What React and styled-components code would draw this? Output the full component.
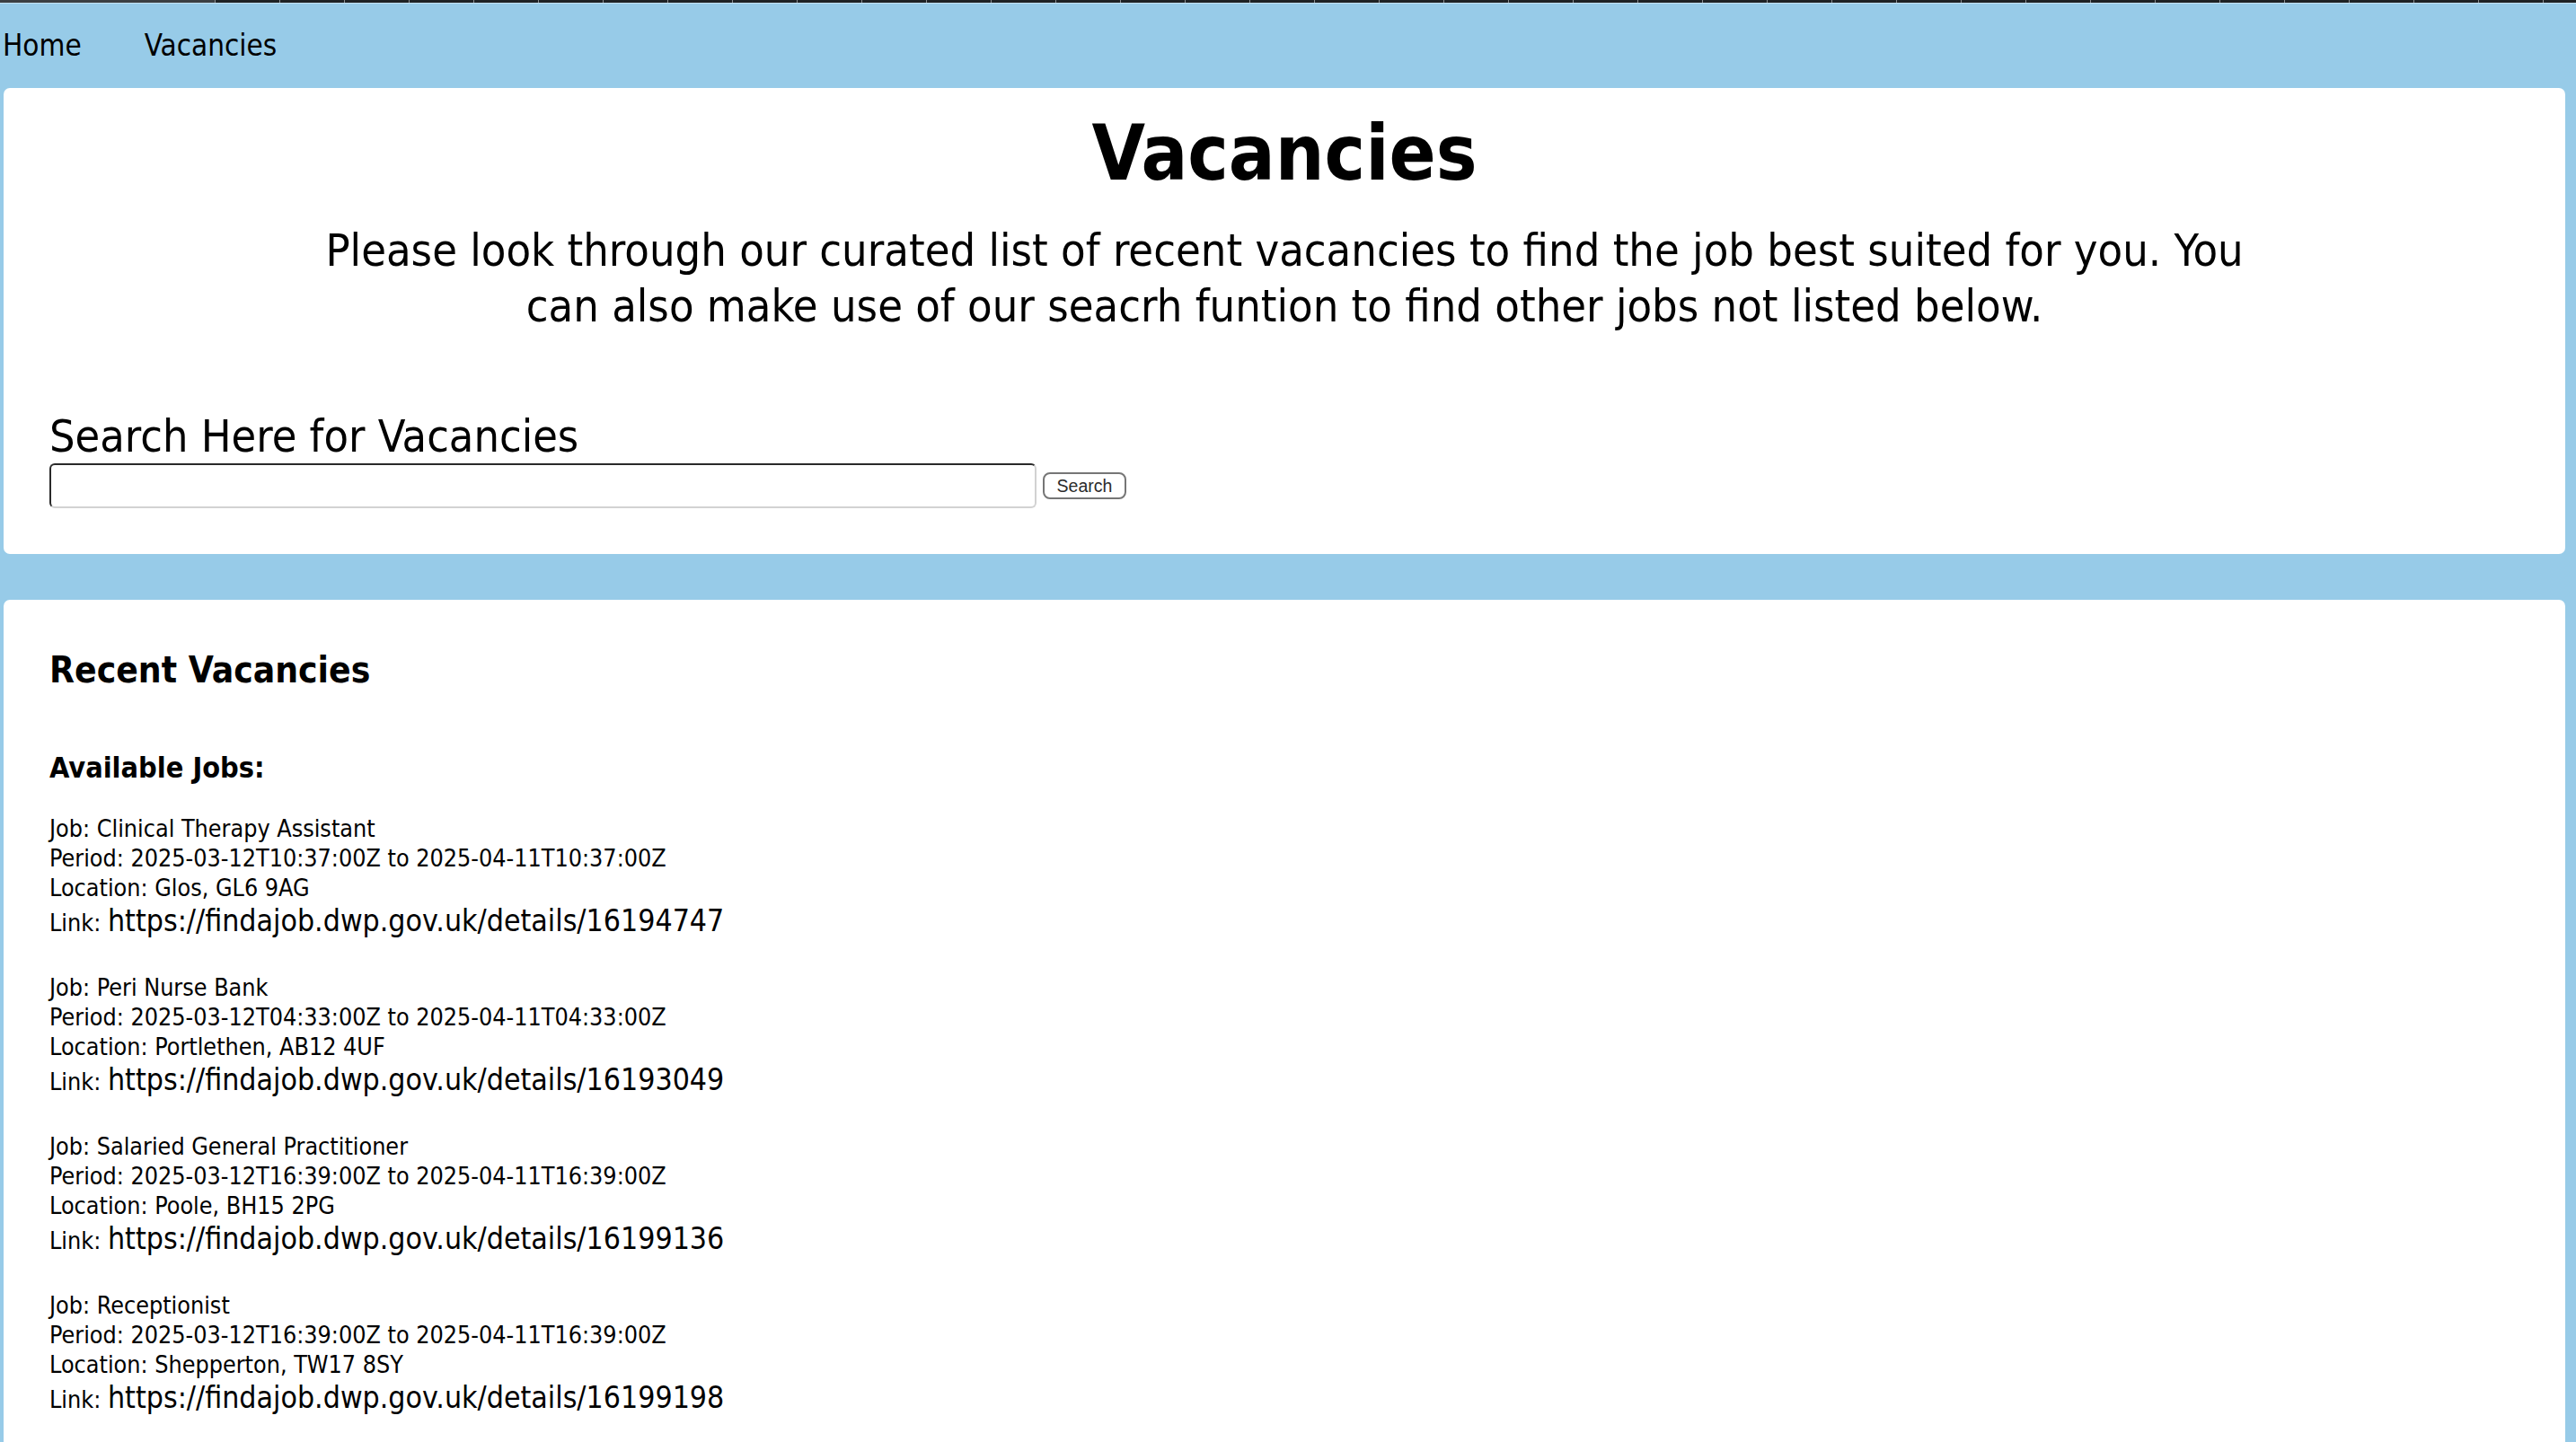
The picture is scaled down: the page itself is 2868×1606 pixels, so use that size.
import React from "react";
import styled, { createGlobalStyle } from "styled-components";

const GlobalStyle = createGlobalStyle`
  html, body {
    margin: 0;
    padding: 0;
    background: #97cbe8;
  }
  body {
    font-family: "DejaVu Sans Condensed", "DejaVu Sans", sans-serif;
    color: #000;
  }
`;

const Page = styled.div`
  min-height: 1606px;
  background: #97cbe8;
`;

const TopStrip = styled.div`
  height: 3px;
  border-bottom: 1px solid #c4e2f2;
  background:
    linear-gradient(to right, #3b3f42 0, #3b3f42 239px, transparent 239px),
    repeating-linear-gradient(
      to right,
      #8a8d90 0,
      #8a8d90 1px,
      #1e2225 1px,
      #1e2225 72px
    );
  background-position: 0 0, 239px 0;
`;

const Nav = styled.nav`
  display: flex;
  align-items: flex-start;
  gap: 70px;
  height: 94px;
  padding: 27px 0 0 3px;
  box-sizing: border-box;
`;

const NavLink = styled.a`
  font-size: 33px;
  line-height: 40px;
  color: #000;
  text-decoration: none;
`;

const Card = styled.section`
  background: #fff;
  border-radius: 7px;
  margin: ${(p) => (p.$gap ? "51px" : "0")} 12px 0 4px;
  padding: ${(p) => p.$pad};
`;

const Title = styled.h1`
  margin: 0;
  text-align: center;
  font-size: 85.5px;
  line-height: 100px;
  font-weight: bold;
`;

const Intro = styled.p`
  margin: 27px auto 0;
  text-align: center;
  font-size: 50.2px;
  line-height: 62px;
`;

const SearchHeading = styled.h2`
  margin: 85px 0 0;
  font-size: 50px;
  line-height: 59px;
  font-weight: normal;
`;

const SearchRow = styled.form`
  display: flex;
  align-items: center;
  gap: 7px;
`;

const SearchInput = styled.input`
  width: 1099px;
  height: 50px;
  box-sizing: border-box;
  border-style: solid;
  border-width: 2px;
  border-color: #2a2a2a #d2d2d2 #d2d2d2 #2a2a2a;
  border-radius: 6px;
  background: #fff;
  outline: none;
  padding: 0 8px;
  font-size: 24px;
`;

const SearchButton = styled.button`
  width: 93px;
  height: 30px;
  box-sizing: border-box;
  border: 2px solid #767676;
  border-radius: 8px;
  background: #fff;
  color: #2b2b2b;
  font-family: "Liberation Sans", Arial, sans-serif;
  font-size: 19.5px;
  padding: 0;
`;

const SectionTitle = styled.h2`
  margin: 0;
  font-size: 40.4px;
  line-height: 50px;
  font-weight: bold;
`;

const SubTitle = styled.h3`
  margin: 66px 0 33px;
  font-size: 32.2px;
  line-height: 36px;
  font-weight: bold;
`;

const JobBlock = styled.div`
  margin-bottom: 34px;
`;

const JobLine = styled.div`
  font-size: 26.7px;
  line-height: ${(p) => (p.$tall ? "42px" : "33px")};
`;

const JobUrl = styled.span`
  font-size: 33.6px;
`;

const jobs = [
  {
    title: "Clinical Therapy Assistant",
    from: "2025-03-12T10:37:00Z",
    to: "2025-04-11T10:37:00Z",
    location: "Glos, GL6 9AG",
    url: "https://findajob.dwp.gov.uk/details/16194747",
  },
  {
    title: "Peri Nurse Bank",
    from: "2025-03-12T04:33:00Z",
    to: "2025-04-11T04:33:00Z",
    location: "Portlethen, AB12 4UF",
    url: "https://findajob.dwp.gov.uk/details/16193049",
  },
  {
    title: "Salaried General Practitioner",
    from: "2025-03-12T16:39:00Z",
    to: "2025-04-11T16:39:00Z",
    location: "Poole, BH15 2PG",
    url: "https://findajob.dwp.gov.uk/details/16199136",
  },
  {
    title: "Receptionist",
    from: "2025-03-12T16:39:00Z",
    to: "2025-04-11T16:39:00Z",
    location: "Shepperton, TW17 8SY",
    url: "https://findajob.dwp.gov.uk/details/16199198",
  },
];

export default function App() {
  return (
    <Page>
      <GlobalStyle />
      <TopStrip />
      <Nav>
        <NavLink href="#">Home</NavLink>
        <NavLink href="#">Vacancies</NavLink>
      </Nav>
      <Card $pad="23px 51px 51px 51px">
        <Title>Vacancies</Title>
        <Intro>
          Please look through our curated list of recent vacancies to find the
          job best suited for you. You
          <br />
          can also make use of our seacrh funtion to find other jobs not listed
          below.
        </Intro>
        <SearchHeading>Search Here for Vacancies</SearchHeading>
        <SearchRow onSubmit={(e) => e.preventDefault()}>
          <SearchInput type="text" />
          <SearchButton type="submit">Search</SearchButton>
        </SearchRow>
      </Card>
      <Card $gap $pad="53px 51px 40px 51px">
        <SectionTitle>Recent Vacancies</SectionTitle>
        <SubTitle>Available Jobs:</SubTitle>
        {jobs.map((j) => (
          <JobBlock key={j.url}>
            <JobLine>Job: {j.title}</JobLine>
            <JobLine>
              Period: {j.from} to {j.to}
            </JobLine>
            <JobLine>Location: {j.location}</JobLine>
            <JobLine $tall>
              Link: <JobUrl>{j.url}</JobUrl>
            </JobLine>
          </JobBlock>
        ))}
      </Card>
    </Page>
  );
}
